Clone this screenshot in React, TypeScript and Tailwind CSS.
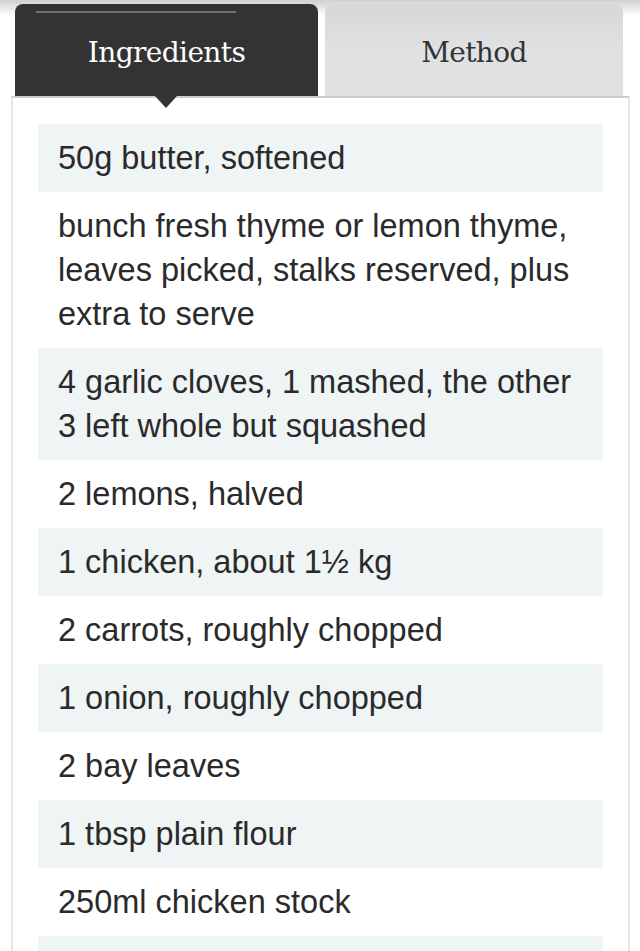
import React from "react";

const items = [
  "50g butter, softened",
  "bunch fresh thyme or lemon thyme, leaves picked, stalks reserved, plus extra to serve",
  "4 garlic cloves, 1 mashed, the other 3 left whole but squashed",
  "2 lemons, halved",
  "1 chicken, about 1½ kg",
  "2 carrots, roughly chopped",
  "1 onion, roughly chopped",
  "2 bay leaves",
  "1 tbsp plain flour",
  "250ml chicken stock",
];

export default function App() {
  return (
    <div className="relative w-[640px] h-[951px] overflow-hidden bg-white">
      <div className="absolute left-0 right-0 top-0 h-[16px] bg-gradient-to-b from-[#d0d0d0] to-white" />
      <div className="relative flex gap-[7px] pl-[15px] pr-[17px] pt-[4px]">
        <div className="relative w-[303px] h-[92px] rounded-t-[8px] bg-[#333333] flex items-center justify-center">
          <div className="absolute top-[7px] left-[21px] w-[200px] h-[2px] bg-[#6e6e6e]" />
          <span className="text-white text-[28px] mt-[6px]" style={{ fontFamily: '"DejaVu Serif", serif', fontWeight: 300, letterSpacing: "-0.6px" }}>
            Ingredients
          </span>
          <div className="absolute left-[151px] -translate-x-1/2 -bottom-[12px] w-0 h-0 border-l-[11px] border-r-[11px] border-t-[12px] border-l-transparent border-r-transparent border-t-[#333333] z-10" />
        </div>
        <div className="w-[298px] h-[92px] rounded-t-[8px] bg-gradient-to-b from-[#d6d7d9] via-[#e0e1e3] to-[#e0e1e3] flex items-center justify-center">
          <span className="text-[#333333] text-[28px] mt-[6px]" style={{ fontFamily: '"DejaVu Serif", serif', letterSpacing: "-0.6px" }}>
            Method
          </span>
        </div>
      </div>
      <div className="mx-[11px] w-[619px] border-t-2 border-t-[#cccccc] border-x-2 border-x-[#e6e6e6] pt-[26px] px-[25px] pb-[40px]">
        <ul className="flex flex-col">
          {items.map((t, i) => (
            <li
              key={i}
              className={`px-[20px] py-[12px] text-[32.5px] leading-[44px] text-[#2a2a2a] ${i % 2 === 0 ? "bg-[#eff4f5]" : "bg-white"}`}
              style={{ fontFamily: '"Liberation Sans", Arial, sans-serif' }}
            >
              {t}
            </li>
          ))}
          <li className="h-[68px] bg-[#eff4f5]" />
        </ul>
      </div>
    </div>
  );
}
